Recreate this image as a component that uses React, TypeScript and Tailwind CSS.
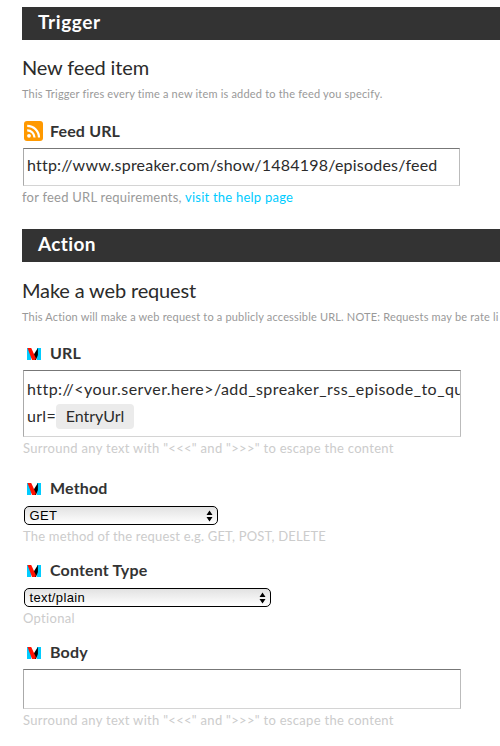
import type { ReactNode } from "react";

const FONT = "font-['Lato','Liberation_Sans',sans-serif]";

function SectionHeader({ children, tracking }: { children: ReactNode; tracking: string }) {
  return (
    <h2 className={`ml-[22px] flex h-[33px] items-center bg-[#333333] pb-[2px] pl-4 text-[19px] font-bold text-white ${tracking}`}>
      {children}
    </h2>
  );
}

function RssIcon() {
  return (
    <svg width="19" height="20" viewBox="0 0 19 20" className="ml-[2px] shrink-0">
      <rect width="19" height="20" rx="3" fill="#ff9900" />
      <circle cx="5" cy="14.8" r="1.9" fill="#fff" />
      <path d="M3.2 9.3a7.3 7.3 0 0 1 7.3 7.3M3.2 4.8a11.8 11.8 0 0 1 11.8 11.8" fill="none" stroke="#fff" strokeWidth="2.2" />
    </svg>
  );
}

function MakerIcon() {
  return (
    <svg width="14" height="12" viewBox="0 0 14 12" className="ml-[4.5px] shrink-0">
      <path d="M0 0h4v12H0zM10 0h4v12h-4z" fill="#00ccff" />
      <path d="M10.9 0v7L9 12H6.5L7 6.3z" fill="#000" />
      <path d="M0.5 0h3.7L7 6l1.8 4L8.2 12H5z" fill="#ff1100" />
    </svg>
  );
}

function Label({ icon, children }: { icon: ReactNode; children: ReactNode }) {
  return (
    <div className="ml-[22px] flex h-5 items-center">
      <div className="flex w-[27px] items-center">{icon}</div>
      <span className="ml-[1px] text-[16px] leading-5 font-bold tracking-[0.15px] text-[#333333]">{children}</span>
    </div>
  );
}

function MakerLabel({ children }: { children: ReactNode }) {
  return (
    <Label icon={<MakerIcon />}>
      <span className="block pb-[2px] leading-[18px]">{children}</span>
    </Label>
  );
}

function Hint({ children, tracking = "tracking-[0.3px]" }: { children: ReactNode; tracking?: string }) {
  return <p className={`ml-[23px] h-5 text-[13px] leading-[19px] whitespace-nowrap text-[#cccccc] ${tracking}`}>{children}</p>;
}

function Select({ value, width }: { value: string; width: string }) {
  return (
    <div
      className={`ml-[24px] flex h-[19px] items-center justify-between rounded-[5px] border border-black bg-linear-to-b from-[#e2e2e2] to-white pr-[4px] pl-[4.5px] font-['Liberation_Sans',sans-serif] text-[13px] leading-[17px] text-black ${width}`}
    >
      <span className="tracking-[0.35px]">{value}</span>
      <svg width="7" height="12" viewBox="0 0 7 12">
        <path d="M3.5 0.5l3 4.5h-6zM3.5 11.5l-3-4.5h6z" fill="#000" />
      </svg>
    </div>
  );
}

const BOX =
  "ml-[23px] overflow-hidden border border-t-[#777777] border-r-[#bbbbbb] border-b-[#d4d4d4] border-l-[#aaaaaa] bg-white pl-[3px] text-[16px] whitespace-nowrap text-[#2b2b2b]";

export default function App() {
  return (
    <main className={`h-[746px] w-[500px] overflow-hidden bg-white pt-[7px] ${FONT}`}>
      <section className="h-[222px]">
        <SectionHeader tracking="tracking-[0.6px]">Trigger</SectionHeader>
        <h3 className="mt-[14px] ml-[22px] h-[26px] text-[20px] leading-[26px] tracking-[-0.15px] text-[#2b2b2b]">
          New feed item
        </h3>
        <p className="mt-[6px] ml-[22px] h-4 text-[11px] leading-4 tracking-[0.19px] whitespace-nowrap text-[#999999]">
          This Trigger fires every time a new item is added to the feed you specify.
        </p>
        <div className="mt-[19px]">
          <Label icon={<RssIcon />}>Feed URL</Label>
        </div>
        <div className={`mt-[7px] h-[38px] w-[437px] leading-[32px] tracking-[0.21px] ${BOX}`}>
          http://www.spreaker.com/show/1484198/episodes/feed
        </div>
        <p className="mt-[2px] ml-[22px] h-5 text-[13px] leading-[19px] tracking-[0.23px] text-[#999999]">
          for feed URL requirements, <a className="text-[#00ccff]">visit the help page</a>
        </p>
      </section>
      <section>
        <SectionHeader tracking="tracking-[0.35px]">Action</SectionHeader>
        <h3 className="mt-[15px] ml-[22px] h-[26px] text-[20px] leading-[26px] tracking-[-0.15px] text-[#2b2b2b]">
          Make a web request
        </h3>
        <p className="mt-[6px] ml-[22px] h-4 text-[11px] leading-4 tracking-[0.18px] whitespace-nowrap text-[#999999]">
          This Action will make a web request to a publicly accessible URL. NOTE: Requests may be rate li
        </p>
        <div className="mt-[19px]">
          <MakerLabel>URL</MakerLabel>
        </div>
        <div className={`mt-[6px] h-[67px] w-[438px] pt-[4px] leading-[27px] ${BOX}`}>
          <div className="tracking-[0.45px]">http://&lt;your.server.here&gt;/add_spreaker_rss_episode_to_qu</div>
          <div className="flex items-center">
            <span className="w-[29px] tracking-[0.3px]">url=</span>
            <span className="mt-[2px] h-[25px] w-[78px] rounded-[4px] bg-[#ebebeb] text-center leading-[24px]">EntryUrl</span>
          </div>
        </div>
        <div className="mt-[2px]">
          <Hint>Surround any text with "&lt;&lt;&lt;" and "&gt;&gt;&gt;" to escape the content</Hint>
        </div>
        <div className="mt-[20px] mb-[7px]">
          <MakerLabel>Method</MakerLabel>
        </div>
        <Select value="GET" width="w-[194px]" />
        <div className="mt-[2px]">
          <Hint tracking="tracking-[0.19px]">The method of the request e.g. GET, POST, DELETE</Hint>
        </div>
        <div className="mt-[14px] mb-[7px]">
          <MakerLabel>Content Type</MakerLabel>
        </div>
        <Select value="text/plain" width="w-[247px]" />
        <div className="mt-[2px]">
          <Hint>Optional</Hint>
        </div>
        <div className="mt-[14px]">
          <MakerLabel>Body</MakerLabel>
        </div>
        <div className={`mt-[6px] h-[40px] w-[438px] ${BOX}`} />
        <div className="mt-[2px]">
          <Hint>Surround any text with "&lt;&lt;&lt;" and "&gt;&gt;&gt;" to escape the content</Hint>
        </div>
      </section>
    </main>
  );
}
